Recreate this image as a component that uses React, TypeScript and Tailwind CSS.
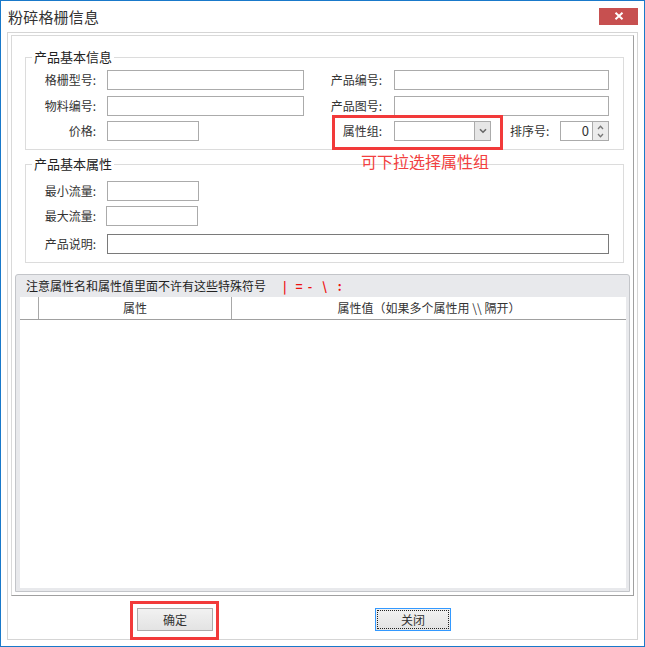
import React from "react";

const inputCls = "h-[20px] border border-[#ababab] bg-white";

function Label({ text, w = "w-[70px]" }: { text: string; w?: string }) {
  return (
    <div className={`${w} text-right leading-[20px] whitespace-nowrap`}>{text}</div>
  );
}

function GroupBox({
  title,
  className,
  children,
}: {
  title: string;
  className: string;
  children: React.ReactNode;
}) {
  return (
    <div className={`relative border border-[#dcdcdc] ml-[13px] mr-[9px] ${className}`}>
      <span className="absolute left-[6px] top-[-9px] bg-white px-[2px] leading-[16px] text-[13px] text-[#222]">
        {title}
      </span>
      {children}
    </div>
  );
}

export default function App() {
  return (
    <div className="relative w-[645px] h-[647px] border border-[#1979ca] bg-white flex flex-col font-['Noto_Sans_CJK_SC','Microsoft_YaHei',sans-serif] text-[12px] text-[#333]">
      {/* Title bar */}
      <div className="h-[31px] shrink-0 flex items-center justify-between pl-[7px] pr-[6px]">
        <span className="text-[15px] leading-[20px] text-[#333] tracking-[0.2px]">粉碎格栅信息</span>
        <div className="w-[39px] h-[17px] bg-[#c75050] flex items-center justify-center mb-[1px]">
          <svg width="10" height="8" viewBox="0 0 10 8">
            <path d="M1.5 0.8 L8.5 7.2 M8.5 0.8 L1.5 7.2" stroke="white" strokeWidth="2" />
          </svg>
        </div>
      </div>

      {/* Body */}
      <div className="flex-1 flex px-[6px] pb-[6px]">
        <div className="flex-1 border border-[#d5d5d5] flex flex-col px-[3px] pt-[2px]">
          {/* Inner box */}
          <div className="h-[561px] shrink-0 border-t border-l border-[#d9d9d9] border-b border-r border-b-[#a0a0a0] border-r-[#a0a0a0] flex flex-col">
            {/* Group 1 */}
            <GroupBox title="产品基本信息" className="mt-[21px] h-[93px] pt-[12px]">
              <div className="flex h-[20px] items-center">
                <Label text="格栅型号:" />
                <div className={`${inputCls} ml-[11px] w-[197px]`} />
                <Label text="产品编号:" w="w-[78px]" />
                <div className={`${inputCls} ml-[12px] w-[215px]`} />
              </div>
              <div className="flex h-[20px] items-center mt-[6px]">
                <Label text="物料编号:" />
                <div className={`${inputCls} ml-[11px] w-[197px]`} />
                <Label text="产品图号:" w="w-[78px]" />
                <div className={`${inputCls} ml-[12px] w-[215px]`} />
              </div>
              <div className="flex h-[20px] items-center mt-[5px]">
                <Label text="价格:" />
                <div className={`${inputCls} ml-[11px] w-[92px]`} />
                <div className="w-[105px]" />
                <Label text="属性组:" w="w-[78px]" />
                <div className={`${inputCls} ml-[12px] w-[97px] flex justify-end`}>
                  <div className="w-[16px] h-full bg-[#e6e6e6] border-l border-[#ababab] flex items-center justify-center">
                    <svg width="8" height="6" viewBox="0 0 8 6">
                      <path d="M1 1.2 L4 4.2 L7 1.2" stroke="#666" strokeWidth="1.6" fill="none" />
                    </svg>
                  </div>
                </div>
                <div className="ml-[19px] w-[50px] leading-[20px] whitespace-nowrap">排序号:</div>
                <div className={`${inputCls} w-[49px] flex`}>
                  <div className="flex-1 text-right pr-[3px] leading-[18px] text-[13px] text-[#333]">0</div>
                  <div className="w-[16px] h-full bg-[#ececec] border-l border-[#ababab] flex flex-col items-center justify-center gap-[3px]">
                    <svg width="7" height="5" viewBox="0 0 7 5">
                      <path d="M1 4 L3.5 1.2 L6 4" stroke="#777" strokeWidth="1.3" fill="none" />
                    </svg>
                    <svg width="7" height="5" viewBox="0 0 7 5">
                      <path d="M1 1 L3.5 3.8 L6 1" stroke="#777" strokeWidth="1.3" fill="none" />
                    </svg>
                  </div>
                </div>
              </div>
            </GroupBox>

            {/* Group 2 */}
            <GroupBox title="产品基本属性" className="mt-[14px] h-[99px] pt-[16px]">
              <div className="flex h-[20px] items-center">
                <Label text="最小流量:" />
                <div className={`${inputCls} ml-[11px] w-[92px]`} />
              </div>
              <div className="flex h-[20px] items-center mt-[5px]">
                <Label text="最大流量:" />
                <div className={`${inputCls} ml-[10px] w-[92px]`} />
              </div>
              <div className="flex h-[20px] items-center mt-[8px]">
                <Label text="产品说明:" />
                <div className="h-[20px] border border-[#7a7a7a] bg-white ml-[11px] w-[502px]" />
              </div>
            </GroupBox>

            {/* Grid panel */}
            <div className="flex-1 mt-[11px] mx-[3px] mb-[3px] border border-[#c3c5c9] rounded-t-[3px] bg-[#e8e9ec] flex flex-col">
              <div className="h-[22px] shrink-0 flex items-center pl-[10px] text-[12px] text-[#222] leading-[16px]">
                <span>注意属性名和属性值里面不许有这些特殊符号</span>
                <span className="ml-[17px] text-[#ee1111] font-bold">|</span>
                <span className="ml-[9px] text-[#ee1111] font-bold">=</span>
                <span className="ml-[5px] text-[#ee1111] font-bold">-</span>
                <span className="ml-[10px] text-[#ee1111] font-bold">\</span>
                <span className="ml-[11px] text-[#ee1111] font-bold">:</span>
              </div>
              <div className="flex-1 ml-[4px] mr-[3px] mb-[3px] bg-white flex flex-col">
                <div className="h-[23px] shrink-0 border-b border-[#a0a0a0] flex text-[12px] text-[#333] leading-[22px]">
                  <div className="w-[19px] border-r border-[#a8a8a8]" />
                  <div className="w-[193px] border-r border-[#a8a8a8] text-center">属性</div>
                  <div className="flex-1 text-center">属性值（如果多个属性用 \\ 隔开）</div>
                </div>
                <div className="flex-1" />
              </div>
            </div>
          </div>

          {/* Buttons */}
          <div className="flex-1 flex items-start pt-[12px] pl-[126px]">
            <button className="w-[76px] h-[23px] border border-[#acacac] bg-gradient-to-b from-[#f2f2f2] to-[#e3e3e3] text-[12px] text-[#333] leading-[20px]">
              确定
            </button>
            <button className="ml-[162px] w-[76px] h-[23px] border border-[#3399ff] bg-gradient-to-b from-[#f2f2f2] to-[#e3e3e3] p-[1px]">
              <div className="w-full h-full border border-dotted border-[#222] text-[12px] text-[#333] leading-[17px] text-center">
                关闭
              </div>
            </button>
          </div>
        </div>
      </div>

      {/* Annotations */}
      <div className="absolute left-[331px] top-[114px] w-[171px] h-[35px] border-[3px] border-[#f23a3a]" />
      <div className="absolute left-[360px] top-[151px] text-[16px] leading-[18px] text-[#f24040] whitespace-nowrap">
        可下拉选择属性组
      </div>
      <div className="absolute left-[129px] top-[600px] w-[89px] h-[39px] border-[3px] border-[#f23a3a]" />
    </div>
  );
}
